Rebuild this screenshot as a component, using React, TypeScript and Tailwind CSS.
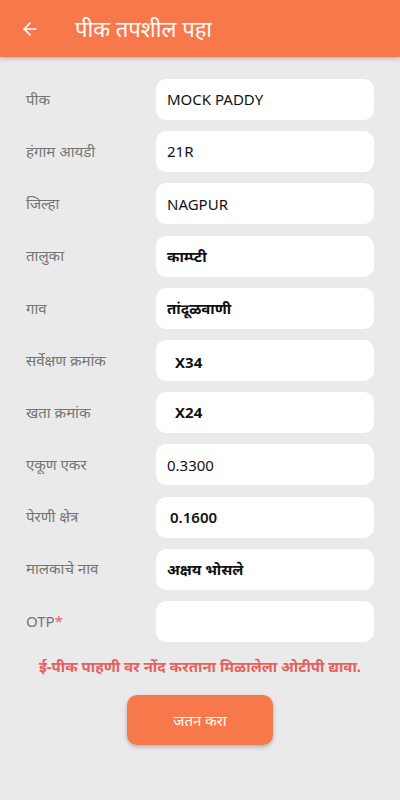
import { ArrowLeft } from "lucide-react";

interface Row {
    label: string;
    value: string;
    valueClass?: string;
    required?: boolean;
}

const rows: Row[] = [
    { label: "पीक", value: "MOCK PADDY" },
    { label: "हंगाम आयडी", value: "21R" },
    { label: "जिल्हा", value: "NAGPUR" },
    { label: "तालुका", value: "काम्प्टी", valueClass: "font-bold" },
    { label: "गाव", value: "तांदूळवाणी", valueClass: "font-bold" },
    { label: "सर्वेक्षण क्रमांक", value: "X34", valueClass: "font-bold text-[13px] pl-[19px] pt-[3px]" },
    { label: "खता क्रमांक", value: "X24", valueClass: "font-bold text-[13px] pl-[19px]" },
    { label: "एकूण एकर", value: "0.3300" },
    { label: "पेरणी क्षेत्र", value: "0.1600", valueClass: "font-semibold text-[13px] pl-[14px]" },
    { label: "मालकाचे नाव", value: "अक्षय भोसले", valueClass: "font-bold" },
    { label: "OTP", value: "", required: true },
];

export default function App() {
    return (
        <div className="min-h-[800px] bg-[#eaeaea] font-['Noto_Sans',sans-serif]">
            {/* Header */}
            <div className="h-[57px] bg-[#f7794b] flex items-center shadow-[0_2px_4px_rgba(0,0,0,0.2)]">
                <ArrowLeft className="w-[20px] h-[20px] text-white ml-[20px]" strokeWidth={2} />
                <h1 className="ml-[35px] text-[22px] text-white">पीक तपशील पहा</h1>
            </div>

            {/* Form */}
            <div className="flex flex-col gap-[11.2px] pt-[22px] pl-[26px] pr-[26px]">
                {rows.map((row) => (
                    <div key={row.label} className="flex items-center">
                        <div className="w-[130px] text-[15px] text-[#757575] -mt-[1px]">
                            {row.label}
                            {row.required && <span className="text-[#e8605e]">*</span>}
                        </div>
                        <div
                            className={`h-[41px] flex-1 bg-white rounded-[10px] flex items-center pl-[11px] text-[15px] text-[#111] ${row.valueClass ?? ""}`}
                        >
                            {row.value}
                        </div>
                    </div>
                ))}
            </div>

            <p className="mt-[13px] text-center text-[15px] font-bold text-[#e8605e]">
                ई-पीक पाहणी वर नोंद करताना मिळालेला ओटीपी द्यावा.
            </p>

            <div className="flex justify-center mt-[18px]">
                <button className="w-[146px] h-[50px] rounded-[10px] bg-[#f7794b] text-white text-[15px] shadow-[0_2px_4px_rgba(0,0,0,0.25)]">
                    जतन करा
                </button>
            </div>
        </div>
    );
}
